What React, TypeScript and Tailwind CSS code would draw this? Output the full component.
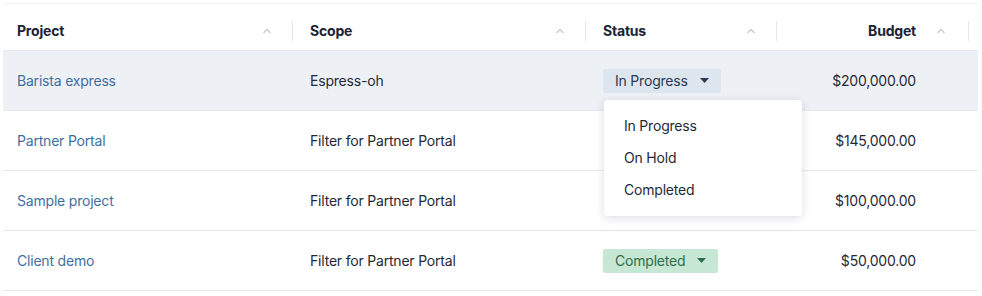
import { useState } from 'react';

type Status = 'In Progress' | 'On Hold' | 'Completed';
type Row = { id: number; project: string; scope: string; status: Status | null; budget: string };

const rows: Row[] = [
  { id: 1, project: 'Barista express', scope: 'Espress-oh', status: 'In Progress', budget: '$200,000.00' },
  { id: 2, project: 'Partner Portal', scope: 'Filter for Partner Portal', status: null, budget: '$145,000.00' },
  { id: 3, project: 'Sample project', scope: 'Filter for Partner Portal', status: null, budget: '$100,000.00' },
  { id: 4, project: 'Client demo', scope: 'Filter for Partner Portal', status: 'Completed', budget: '$50,000.00' },
];

const statusOptions: Status[] = ['In Progress', 'On Hold', 'Completed'];

const gridCols = 'grid grid-cols-[290px_293px_191px_192px_1fr]';

function SortIcon() {
  return (
    <svg width="10" height="6" viewBox="0 0 10 6" className="shrink-0">
      <polyline points="1.5,5 5,1.5 8.5,5" fill="none" stroke="#c5ccd6" strokeWidth="1.3" />
    </svg>
  );
}

function Caret({ color }: { color: string }) {
  return (
    <svg width="9" height="5" viewBox="0 0 9 5">
      <polygon points="0,0 9,0 4.5,5" fill={color} />
    </svg>
  );
}

function HeaderCell({ label, first, right }: { label: string; first?: boolean; right?: boolean }) {
  return (
    <div className="relative flex items-center h-full pt-[7px]">
      {right ? (
        <div className="flex items-center justify-end w-full pr-[23px] gap-[20px]">
          <span>{label}</span>
          <SortIcon />
        </div>
      ) : (
        <div className={`flex items-center justify-between w-full pr-[21px] ${first ? 'pl-[14px]' : 'pl-[17px]'}`}>
          <span>{label}</span>
          <SortIcon />
        </div>
      )}
      <div className="absolute right-0 top-[17px] h-[20px] w-px bg-[#e2e8f0]" />
    </div>
  );
}

function StatusBadge({ status, open, onToggle }: { status: Status; open: boolean; onToggle: () => void }) {
  const done = status === 'Completed';
  return (
    <div className="relative">
      <button
        onClick={onToggle}
        className={`flex items-center gap-[12px] h-[24px] pl-[12px] pr-[12px] rounded-[2px] ${
          done ? 'bg-[#c6e7d4] text-[#2f6e4a]' : 'bg-[#dde5ef] text-[#2a3a52]'
        }`}
      >
        <span>{status}</span>
        <Caret color={done ? '#2f6e4a' : '#2a3a52'} />
      </button>
      {open && (
        <div className="absolute left-[1px] top-[31px] z-10 w-[198px] py-[10px] bg-white rounded-[4px] shadow-[0_2px_10px_rgba(15,23,42,0.14)]">
          {statusOptions.map(o => (
            <div key={o} className="h-[32px] flex items-center pl-[20px] text-[#1f2937]">
              {o}
            </div>
          ))}
        </div>
      )}
    </div>
  );
}

export default function App() {
  const [openId, setOpenId] = useState<number | null>(1);

  return (
    <div className="w-[982px] h-[296px] bg-white pt-[3px] px-[3px] font-['Inter',sans-serif] text-[14px] tracking-[-0.2px] text-[#1f2937]">
      <div className="w-[975px] border-t border-[#f1f3f6]">
        <div className={`${gridCols} h-[47px] font-bold text-[#1a2233] border-b border-[#e3e8ee] shadow-[0_1px_2px_rgba(15,23,42,0.05)]`}>
          <HeaderCell label="Project" first />
          <HeaderCell label="Scope" />
          <HeaderCell label="Status" />
          <HeaderCell label="Budget" right />
          <div />
        </div>
        {rows.map(r => (
          <div
            key={r.id}
            className={`${gridCols} h-[60px] items-center border-b border-[#e5e9ef] ${r.id === 1 ? 'bg-[#edf1f6]' : 'bg-white'}`}
          >
            <div className="pl-[14px] text-[#3f6f9f]">{r.project}</div>
            <div className="pl-[17px]">{r.scope}</div>
            <div className="pl-[17px]">
              {r.status && (
                <StatusBadge
                  status={r.status}
                  open={openId === r.id}
                  onToggle={() => setOpenId(openId === r.id ? null : r.id)}
                />
              )}
            </div>
            <div className="text-right pr-[53px]">{r.budget}</div>
            <div />
          </div>
        ))}
      </div>
    </div>
  );
}
